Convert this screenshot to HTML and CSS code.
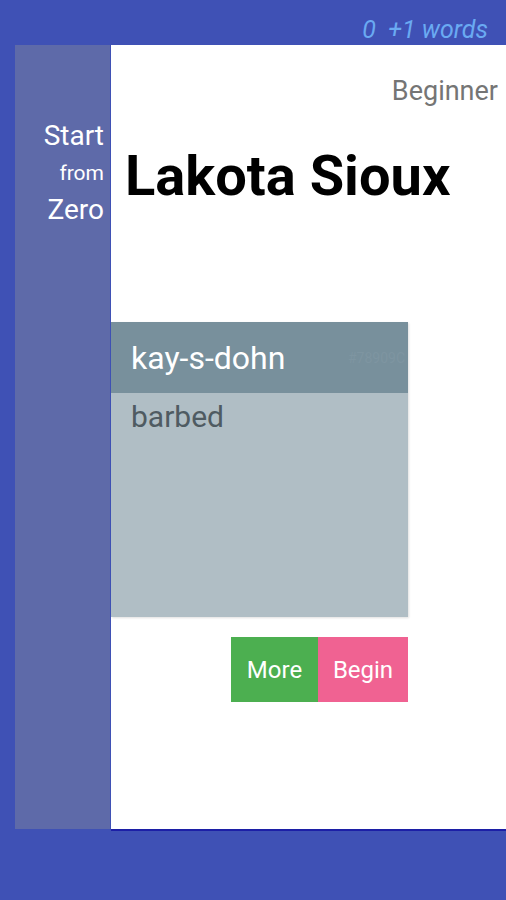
FILE: index.html
```html
<!DOCTYPE html>
<html lang="en">
<head>
  <meta charset="UTF-8" />
  <meta name="viewport" content="width=device-width, initial-scale=1.0" />
  <title>Lakota Sioux</title>
  <link rel="stylesheet" href="styles.css">
</head>
<body>
  <div class="topbar">
    <span class="count">0&nbsp; +1 words</span>
  </div>

  <div class="main">
    <div class="sidebar">
      <div class="big">Start</div>
      <div class="small">from</div>
      <div class="big">Zero</div>
    </div>

    <div class="panel">
      <div class="level">Beginner</div>
      <h1>Lakota Sioux</h1>

      <div class="card">
        <div class="card-head">
          <span class="word">kay-s-dohn</span>
          <span class="hex">#78909C</span>
        </div>
        <div class="card-body">barbed</div>
      </div>

      <div class="actions">
        <button class="more">More</button>
        <button class="begin">Begin</button>
      </div>
    </div>
  </div>
</body>
</html>
```

FILE: styles.css
```css
body {
  font-family: Roboto, "Noto Sans", Arial, sans-serif;
  background-color: #3f51b5;
  margin: 0;
  padding: 0;
}
.topbar {
  height: 45px;
  display: flex;
  justify-content: flex-end;
  align-items: flex-end;
  padding-right: 18px;
}
.count {
  color: #6aaaf2;
  font-style: italic;
  font-size: 25px;
  line-height: 28px;
  padding-bottom: 1px;
}
.main {
  display: flex;
  height: 786px;
}
.sidebar {
  width: 95px;
  margin-left: 15px;
  height: 784px;
  background: #5e6aa9;
  color: #fff;
  text-align: right;
  padding-right: 6px;
  padding-top: 72px;
  box-sizing: border-box;
}
.sidebar .big {
  font-size: 28px;
  line-height: 38px;
}
.sidebar .small {
  font-size: 21px;
  line-height: 36px;
}
.panel {
  flex: 1;
  margin-left: 1px;
  background: #fff;
  height: 784px;
  border-bottom: 2px solid #1c1fa6;
}
.level {
  text-align: right;
  color: #757575;
  font-size: 27px;
  line-height: 30px;
  padding-top: 31px;
  padding-right: 8px;
}
h1 {
  margin: 40px 0 0 0;
  padding-left: 14px;
  font-size: 56px;
  line-height: 60px;
  font-weight: bold;
  color: #000;
}
.card {
  margin-top: 116px;
  width: 297px;
  height: 295px;
  background: #b0bec5;
  box-shadow: 1px 1px 2px rgba(0, 0, 0, 0.12);
}
.card-head {
  height: 71px;
  background: #78909c;
  display: flex;
  align-items: center;
  justify-content: space-between;
  padding-left: 20px;
  padding-right: 3px;
}
.word {
  color: #fff;
  font-size: 32px;
}
.hex {
  color: #7e95a1;
  font-size: 14px;
}
.card-body {
  color: #4f5b62;
  font-size: 30px;
  padding: 6px 0 0 20px;
}
.actions {
  margin-top: 20px;
  width: 297px;
  display: flex;
  justify-content: flex-end;
}
.actions button {
  height: 65px;
  border: none;
  border-radius: 0;
  color: #fff;
  font-family: Roboto, Arial, sans-serif;
  font-size: 24px;
  padding: 0;
}
.more {
  width: 87px;
  background: #4caf50;
}
.begin {
  width: 90px;
  background: #f06292;
}
```
